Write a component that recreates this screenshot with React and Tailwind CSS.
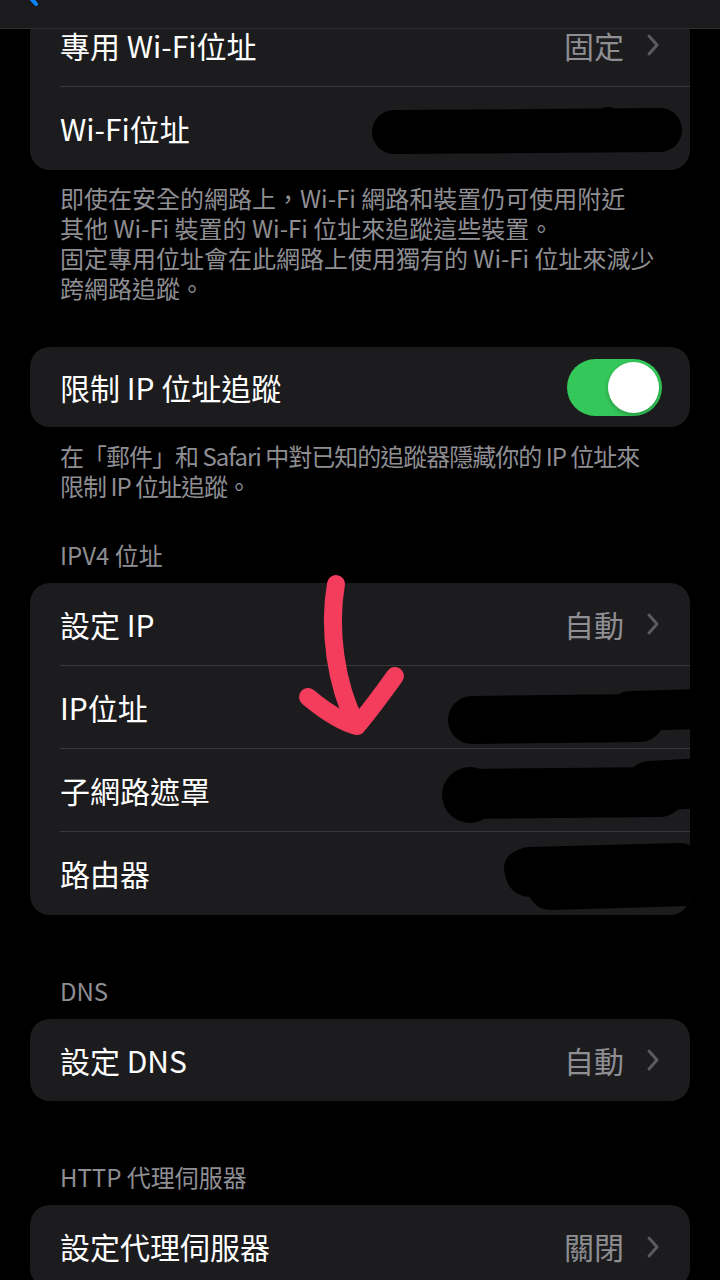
import React from "react";

const Chevron = () => (
  <svg width="14" height="24" viewBox="0 0 14 24" className="ml-[22px] shrink-0">
    <path d="M3 3 L11 12 L3 21" fill="none" stroke="#5a5a5f" strokeWidth="3" strokeLinecap="round" strokeLinejoin="round" />
  </svg>
);

const Row = ({ label, value, chevron, last, children, h = "h-[83px]" }) => (
  <div className={`relative flex ${h} pl-[30px]`}>
    <div className={`flex flex-1 items-center pr-[30px] ${last ? "" : "border-b border-[#38383a]"}`}>
      <span className="flex-1 whitespace-nowrap text-[30px] text-white">{label}</span>
      {value && <span className="whitespace-nowrap text-[30px] text-[#8e8e93]">{value}</span>}
      {chevron && <Chevron />}
      {children}
    </div>
  </div>
);

const Blot = ({ children }) => (
  <svg className="pointer-events-none absolute left-0 top-0" width="660" height="83" viewBox="0 0 660 83">
    <g stroke="#000" strokeLinecap="round" strokeLinejoin="round" fill="none">
      {children}
    </g>
  </svg>
);

const Footer = ({ lines, pt = "pt-[13px]", track = "" }) => (
  <div className={`px-[30px] ${pt} ${track} text-[24px] leading-[30px] text-[#8e8e93]`}>
    {lines.map((l, i) => (
      <div key={i} className="whitespace-nowrap">{l}</div>
    ))}
  </div>
);

const Header = ({ children, mt }) => (
  <div className={`${mt} px-[30px] pb-[13px] text-[24px] leading-[30px] text-[#8e8e93] whitespace-nowrap`}>{children}</div>
);

export default function App() {
  return (
    <div
      className="relative h-[1280px] w-[720px] overflow-hidden bg-black"
      style={{ fontFamily: '"Noto Sans CJK TC", "Noto Sans", sans-serif' }}
    >
      <div className="flex flex-col px-[30px] pt-[4px]">
        {/* card 1 */}
        <div className="overflow-hidden rounded-[20px] bg-[#1c1c1e]">
          <Row label="專用 Wi-Fi位址" value="固定" chevron />
          <Row label="Wi-Fi位址" last>
            <Blot>
              <line x1="364" y1="45" x2="630" y2="43" strokeWidth="44" />
              <circle cx="578" cy="34" r="14" fill="#000" strokeWidth="0" />
            </Blot>
          </Row>
        </div>

        <Footer
          lines={[
            "即使在安全的網路上，Wi-Fi 網路和裝置仍可使用附近",
            "其他 Wi-Fi 裝置的 Wi-Fi 位址來追蹤這些裝置。",
            "固定專用位址會在此網路上使用獨有的 Wi-Fi 位址來減少",
            "跨網路追蹤。",
          ]}
        />

        {/* card 2 */}
        <div className="mt-[44px] overflow-hidden rounded-[20px] bg-[#1c1c1e]">
          <div className="flex h-[80px] items-center pl-[30px] pr-[28px]">
            <span className="flex-1 whitespace-nowrap text-[30px] text-white">限制 IP 位址追蹤</span>
            <div className="flex h-[57px] w-[95px] items-center justify-end rounded-full bg-[#34c759] p-[3px]">
              <div className="h-[51px] w-[51px] rounded-full bg-white shadow-[0_2px_4px_rgba(0,0,0,0.25)]" />
            </div>
          </div>
        </div>

        <Footer
          pt="pt-[14px]"
          track="tracking-[-1px]"
          lines={["在「郵件」和 Safari 中對已知的追蹤器隱藏你的 IP 位址來", "限制 IP 位址追蹤。"]}
        />

        <Header mt="mt-[39px]">IPV4 位址</Header>
        <div className="overflow-hidden rounded-[20px] bg-[#1c1c1e]">
          <Row label="設定 IP" value="自動" chevron />
          <Row label="IP位址">
            <Blot>
              <line x1="442" y1="54" x2="610" y2="52" strokeWidth="48" />
              <line x1="600" y1="45" x2="672" y2="43" strokeWidth="40" />
            </Blot>
          </Row>
          <Row label="子網路遮罩">
            <Blot>
              <line x1="440" y1="45" x2="630" y2="43" strokeWidth="50" />
              <line x1="620" y1="37" x2="672" y2="34" strokeWidth="50" />
              <circle cx="440" cy="46" r="28" fill="#000" strokeWidth="0" />
            </Blot>
          </Row>
          <Row label="路由器" last>
            <Blot>
              <line x1="500" y1="40" x2="650" y2="36" strokeWidth="50" />
              <line x1="520" y1="56" x2="660" y2="52" strokeWidth="44" />
              <circle cx="492" cy="36" r="18" fill="#000" strokeWidth="0" />
            </Blot>
          </Row>
        </div>

        <Header mt="mt-[61px]">DNS</Header>
        <div className="overflow-hidden rounded-[20px] bg-[#1c1c1e]">
          <Row label="設定 DNS" value="自動" chevron last h="h-[82px]" />
        </div>

        <Header mt="mt-[61px]">HTTP 代理伺服器</Header>
        <div className="overflow-hidden rounded-[20px] bg-[#1c1c1e]">
          <Row label="設定代理伺服器" value="關閉" chevron last />
        </div>
      </div>

      {/* top nav bar overlay */}
      <div className="absolute left-0 right-0 top-0 h-[29px] border-b border-[#2e2e30] bg-[#1b1b1d]">
        <svg className="absolute left-[24px] top-0" width="20" height="10" viewBox="0 0 20 10">
          <path d="M3 -6 L12 4" stroke="#0a84ff" strokeWidth="4" strokeLinecap="round" fill="none" />
        </svg>
      </div>

      {/* hand-drawn arrow annotation */}
      <svg className="pointer-events-none absolute left-0 top-0" width="720" height="1280" viewBox="0 0 720 1280">
        <g fill="none" stroke="#f43c5c" strokeWidth="18" strokeLinecap="round" strokeLinejoin="round">
          <path d="M336 584 C 328 630, 336 685, 356 724" />
          <path d="M308 697 C 326 712, 342 722, 357 726 C 372 708, 385 690, 395 676" />
        </g>
      </svg>
    </div>
  );
}
